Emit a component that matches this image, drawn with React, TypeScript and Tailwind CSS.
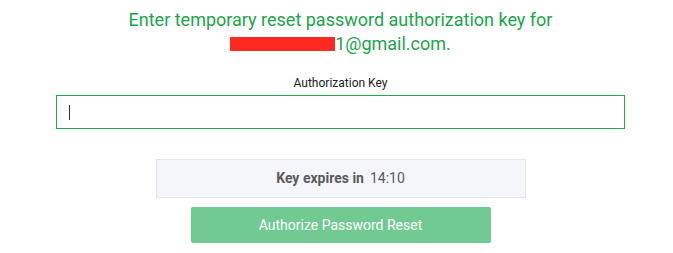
import React from 'react';

export default function App() {
  return (
    <div className="min-h-screen bg-white pl-2 font-['Roboto','Liberation_Sans',sans-serif]">
      <div className="flex flex-col items-center pt-2">
        {/* Heading */}
        <h2 className="text-center text-[18px] leading-6 font-normal text-[#1aa64b]">
          Enter temporary reset password authorization key for
          <br />
          <span className="inline-block h-[14px] w-[105px] bg-[#ff2a1f] align-[-1px]" />
          1@gmail.com.
        </h2>

        {/* Field */}
        <label className="mt-[19px] text-[12px] leading-4 text-[#222]">Authorization Key</label>
        <div className="mt-1 w-full px-12">
          <div className="flex h-[34px] w-full items-center border border-[#22a94f] bg-white pl-3">
            <span className="h-[15px] w-px bg-[#333]" />
          </div>
        </div>

        {/* Expiry */}
        <div className="mt-[30px] flex h-[39px] w-[370px] items-center justify-center border border-[#e4e5e8] bg-[#f5f6fa] text-[14px] text-[#5b5b5b]">
          <span className="font-bold">Key expires in</span>
          <span className="ml-[6px]">14:10</span>
        </div>

        {/* Action */}
        <button className="mt-[9px] h-[36px] w-[300px] rounded-[2px] bg-[#70ca91] text-[14px] text-white">
          Authorize Password Reset
        </button>
      </div>
    </div>
  );
}
